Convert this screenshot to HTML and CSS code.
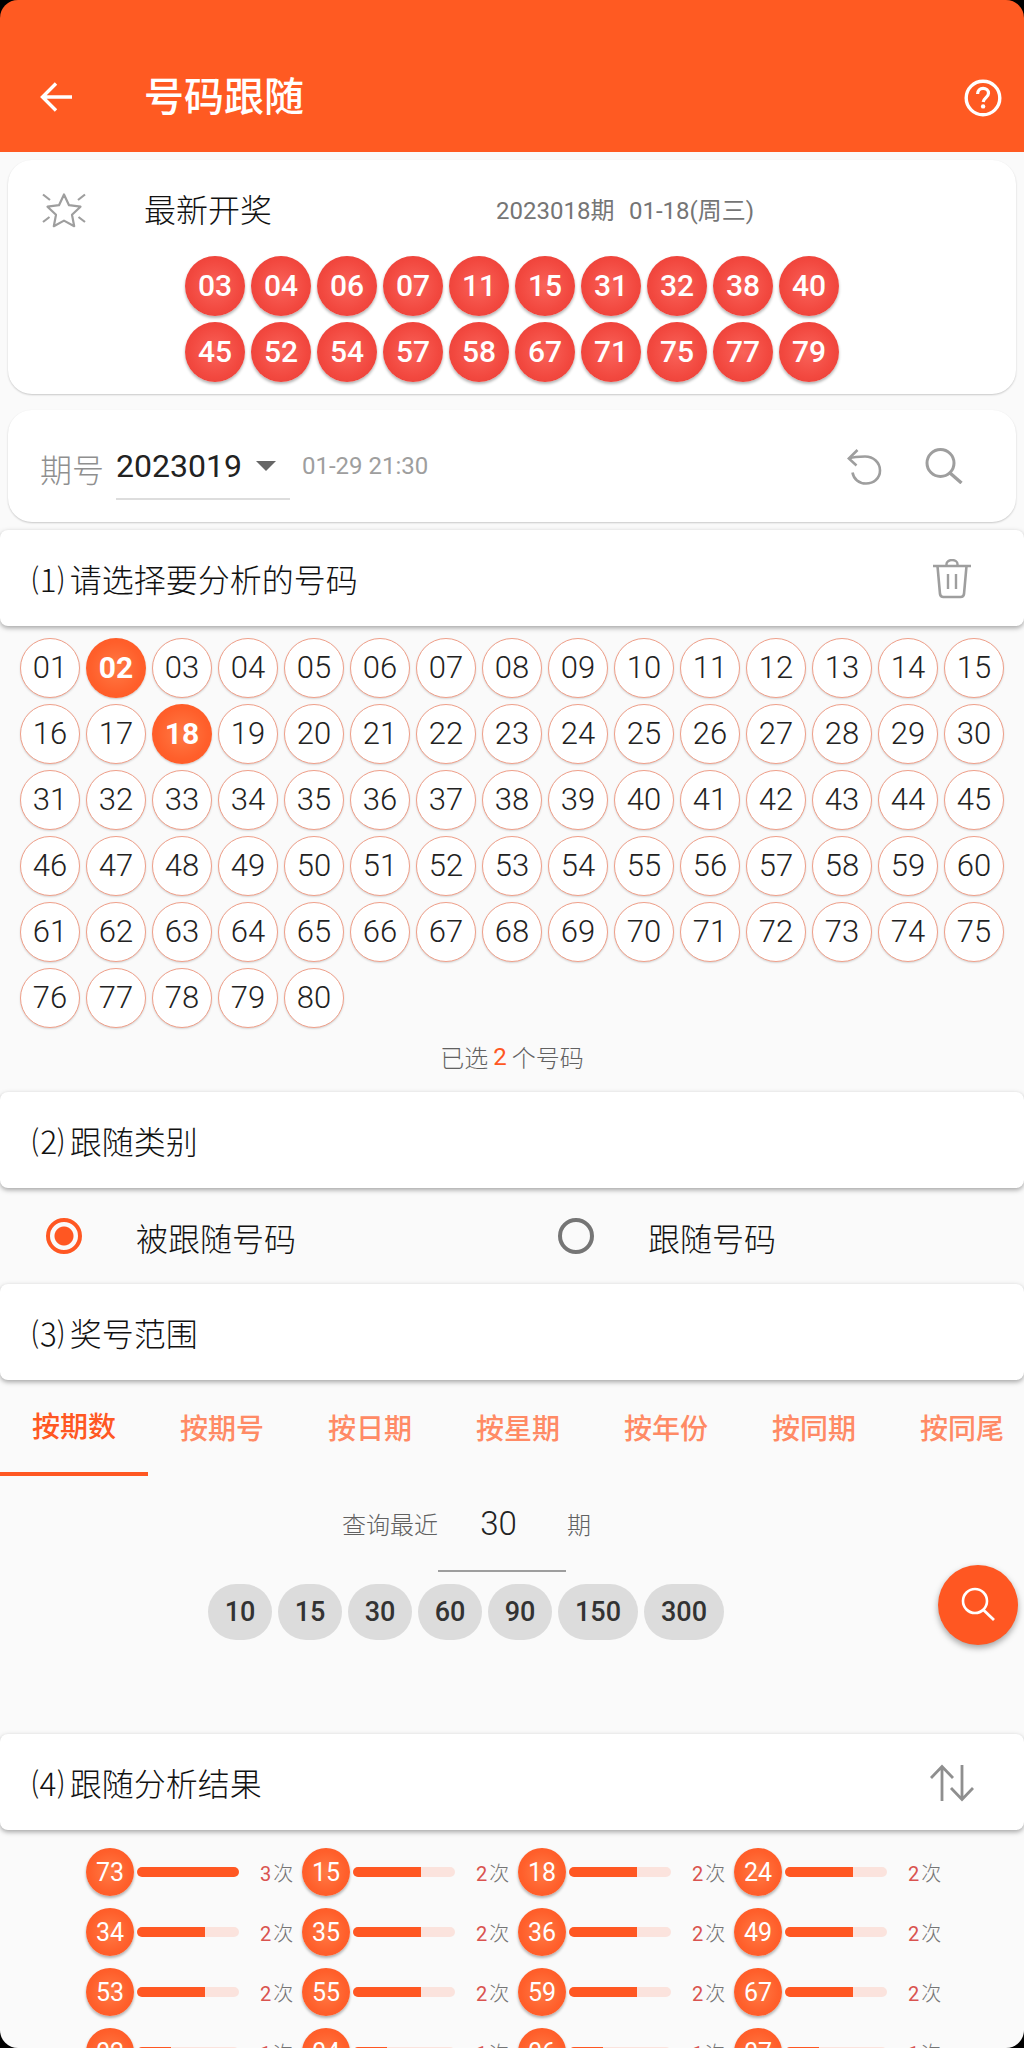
FILE: index.html
```html
<!DOCTYPE html>
<html lang="zh-CN">
<head>
<meta charset="utf-8">
<title>号码跟随</title>
<link rel="stylesheet" href="styles.css">
</head>
<body>
<div class="screen">
  <header class="appbar">
    <svg class="appbar-back" viewBox="0 0 34 34" width="34" height="34"><path d="M32 17H3M16 3.500 2.500 17 16 30.500" fill="none" stroke="#fff" stroke-width="3.400"/></svg>
    <h1 class="appbar-title">号码跟随</h1>
    <svg class="appbar-help" viewBox="0 0 38 38" width="38" height="38"><circle cx="19" cy="19" r="16.800" fill="none" stroke="#fff" stroke-width="3.400"/><path d="M13.600 15c0-3.400 2.400-5.600 5.500-5.600s5.400 2 5.400 4.900c0 4-4.800 4.500-5.300 8.700" fill="none" stroke="#fff" stroke-width="3.200"/><circle cx="19.100" cy="27.400" r="2.200" fill="#fff"/></svg>
  </header>

  <section class="card card-latest">
    <div class="latest-head">
      <svg class="latest-star" viewBox="0 0 44 38" width="44" height="38"><path d="M22 2.500 27 13.200 38.500 14.700 30 22.700 32.200 34.200 22 28.600 11.800 34.200 14 22.700 5.500 14.700 17 13.200Z" fill="none" stroke="#9e9e9e" stroke-width="2.200" stroke-linejoin="round"/><path d="M1 2.500 8 8M43 2.500 36 8M1 30 7.500 25M43 30 36.500 25" stroke="#9e9e9e" stroke-width="2.200" fill="none"/></svg>
      <span class="latest-title">最新开奖</span>
      <span class="latest-info">2023018期&nbsp;&nbsp;01-18(周三)</span>
    </div>
    <div class="latest-balls">
      <span class="ball ball-red">03</span><span class="ball ball-red">04</span><span class="ball ball-red">06</span><span class="ball ball-red">07</span><span class="ball ball-red">11</span><span class="ball ball-red">15</span><span class="ball ball-red">31</span><span class="ball ball-red">32</span><span class="ball ball-red">38</span><span class="ball ball-red">40</span>
      <span class="ball ball-red">45</span><span class="ball ball-red">52</span><span class="ball ball-red">54</span><span class="ball ball-red">57</span><span class="ball ball-red">58</span><span class="ball ball-red">67</span><span class="ball ball-red">71</span><span class="ball ball-red">75</span><span class="ball ball-red">77</span><span class="ball ball-red">79</span>
    </div>
  </section>

  <section class="card card-issue">
    <span class="issue-label">期号</span>
    <div class="issue-select"><span>2023019</span><i class="issue-caret"></i></div>
    <span class="issue-time">01-29 21:30</span>
    <svg class="issue-undo" viewBox="0 0 36 36" width="36" height="36"><path d="M2 9.500C6 8 12 7.500 18 7.500c8.500 0 15 6 15 14s-6.500 13-14 13c-7 0-12.500-4.500-13.500-11" fill="none" stroke="#9e9e9e" stroke-width="2.600"/><path d="M10.500 1 1.800 9.500l7.700 7" fill="none" stroke="#9e9e9e" stroke-width="2.600"/></svg>
    <svg class="issue-search" viewBox="0 0 38 36" width="38" height="36"><circle cx="15.500" cy="15" r="13.500" fill="none" stroke="#9e9e9e" stroke-width="3"/><path d="M25 25 36.500 35" stroke="#9e9e9e" stroke-width="3.400" fill="none"/></svg>
  </section>

  <div class="section-head section-first">
    <span>⑴ 请选择要分析的号码</span>
    <svg class="icon-trash" viewBox="0 0 38 40" width="38" height="40"><path d="M0 7H38" stroke="#9e9e9e" stroke-width="2.400"/><path d="M13.500 7V5a5.500 4 0 0 1 11 0v2" fill="none" stroke="#9e9e9e" stroke-width="2.400"/><path d="M4.500 7 7 35a3.500 3.500 0 0 0 3.500 3h17a3.500 3.500 0 0 0 3.500-3L33.500 7" fill="none" stroke="#9e9e9e" stroke-width="2.600"/><path d="M15 15V30M23 15V30" stroke="#9e9e9e" stroke-width="2.400"/></svg>
  </div>

  <div class="pick-grid">
    <span class="ball ball-line">01</span><span class="ball ball-on">02</span><span class="ball ball-line">03</span><span class="ball ball-line">04</span><span class="ball ball-line">05</span><span class="ball ball-line">06</span><span class="ball ball-line">07</span><span class="ball ball-line">08</span><span class="ball ball-line">09</span><span class="ball ball-line">10</span><span class="ball ball-line">11</span><span class="ball ball-line">12</span><span class="ball ball-line">13</span><span class="ball ball-line">14</span><span class="ball ball-line">15</span>
    <span class="ball ball-line">16</span><span class="ball ball-line">17</span><span class="ball ball-on">18</span><span class="ball ball-line">19</span><span class="ball ball-line">20</span><span class="ball ball-line">21</span><span class="ball ball-line">22</span><span class="ball ball-line">23</span><span class="ball ball-line">24</span><span class="ball ball-line">25</span><span class="ball ball-line">26</span><span class="ball ball-line">27</span><span class="ball ball-line">28</span><span class="ball ball-line">29</span><span class="ball ball-line">30</span>
    <span class="ball ball-line">31</span><span class="ball ball-line">32</span><span class="ball ball-line">33</span><span class="ball ball-line">34</span><span class="ball ball-line">35</span><span class="ball ball-line">36</span><span class="ball ball-line">37</span><span class="ball ball-line">38</span><span class="ball ball-line">39</span><span class="ball ball-line">40</span><span class="ball ball-line">41</span><span class="ball ball-line">42</span><span class="ball ball-line">43</span><span class="ball ball-line">44</span><span class="ball ball-line">45</span>
    <span class="ball ball-line">46</span><span class="ball ball-line">47</span><span class="ball ball-line">48</span><span class="ball ball-line">49</span><span class="ball ball-line">50</span><span class="ball ball-line">51</span><span class="ball ball-line">52</span><span class="ball ball-line">53</span><span class="ball ball-line">54</span><span class="ball ball-line">55</span><span class="ball ball-line">56</span><span class="ball ball-line">57</span><span class="ball ball-line">58</span><span class="ball ball-line">59</span><span class="ball ball-line">60</span>
    <span class="ball ball-line">61</span><span class="ball ball-line">62</span><span class="ball ball-line">63</span><span class="ball ball-line">64</span><span class="ball ball-line">65</span><span class="ball ball-line">66</span><span class="ball ball-line">67</span><span class="ball ball-line">68</span><span class="ball ball-line">69</span><span class="ball ball-line">70</span><span class="ball ball-line">71</span><span class="ball ball-line">72</span><span class="ball ball-line">73</span><span class="ball ball-line">74</span><span class="ball ball-line">75</span>
    <span class="ball ball-line">76</span><span class="ball ball-line">77</span><span class="ball ball-line">78</span><span class="ball ball-line">79</span><span class="ball ball-line">80</span>
  </div>
  <p class="pick-count">已选 <b>2</b> 个号码</p>

  <div class="section-head"><span>⑵ 跟随类别</span></div>
  <div class="radio-row">
    <label class="radio-item"><i class="radio radio-on"></i><span>被跟随号码</span></label>
    <label class="radio-item"><i class="radio"></i><span>跟随号码</span></label>
  </div>

  <div class="section-head"><span>⑶ 奖号范围</span></div>
  <nav class="tabs">
    <span class="tab tab-on">按期数</span><span class="tab">按期号</span><span class="tab">按日期</span><span class="tab">按星期</span><span class="tab">按年份</span><span class="tab">按同期</span><span class="tab">按同尾</span>
  </nav>
  <div class="range">
    <div class="query">
      <span class="query-label">查询最近</span>
      <span class="query-input">30</span>
      <span class="query-label query-unit">期</span>
    </div>
    <div class="chips">
      <span class="chip">10</span><span class="chip">15</span><span class="chip">30</span><span class="chip">60</span><span class="chip">90</span><span class="chip chip-wide">150</span><span class="chip chip-wide">300</span>
    </div>
    <div class="fab"><svg viewBox="0 0 36 36" width="36" height="36"><circle cx="15" cy="14" r="12" fill="none" stroke="#fff" stroke-width="2.600"/><path d="M23.500 23 34 33" stroke="#fff" stroke-width="2.800" fill="none"/></svg></div>
  </div>

  <div class="section-head">
    <span>⑷ 跟随分析结果</span>
    <svg class="icon-sort" viewBox="0 0 44 38" width="44" height="38"><path d="M12 37V3M1 14 12 2.500 23 14" fill="none" stroke="#8f8f8f" stroke-width="2.800"/><path d="M32 1V35M21 24 32 35.500 43 24" fill="none" stroke="#8f8f8f" stroke-width="2.800"/></svg>
  </div>
  <div class="results">
    <div class="res"><span class="ball ball-res">73</span><span class="bar"><i class="bar-fill bar-3"></i></span><span class="res-n"><em>3</em>次</span></div>
    <div class="res"><span class="ball ball-res">15</span><span class="bar"><i class="bar-fill bar-2"></i></span><span class="res-n"><em>2</em>次</span></div>
    <div class="res"><span class="ball ball-res">18</span><span class="bar"><i class="bar-fill bar-2"></i></span><span class="res-n"><em>2</em>次</span></div>
    <div class="res"><span class="ball ball-res">24</span><span class="bar"><i class="bar-fill bar-2"></i></span><span class="res-n"><em>2</em>次</span></div>
    <div class="res"><span class="ball ball-res">34</span><span class="bar"><i class="bar-fill bar-2"></i></span><span class="res-n"><em>2</em>次</span></div>
    <div class="res"><span class="ball ball-res">35</span><span class="bar"><i class="bar-fill bar-2"></i></span><span class="res-n"><em>2</em>次</span></div>
    <div class="res"><span class="ball ball-res">36</span><span class="bar"><i class="bar-fill bar-2"></i></span><span class="res-n"><em>2</em>次</span></div>
    <div class="res"><span class="ball ball-res">49</span><span class="bar"><i class="bar-fill bar-2"></i></span><span class="res-n"><em>2</em>次</span></div>
    <div class="res"><span class="ball ball-res">53</span><span class="bar"><i class="bar-fill bar-2"></i></span><span class="res-n"><em>2</em>次</span></div>
    <div class="res"><span class="ball ball-res">55</span><span class="bar"><i class="bar-fill bar-2"></i></span><span class="res-n"><em>2</em>次</span></div>
    <div class="res"><span class="ball ball-res">59</span><span class="bar"><i class="bar-fill bar-2"></i></span><span class="res-n"><em>2</em>次</span></div>
    <div class="res"><span class="ball ball-res">67</span><span class="bar"><i class="bar-fill bar-2"></i></span><span class="res-n"><em>2</em>次</span></div>
    <div class="res"><span class="ball ball-res">02</span><span class="bar"><i class="bar-fill bar-1"></i></span><span class="res-n"><em>1</em>次</span></div>
    <div class="res"><span class="ball ball-res">04</span><span class="bar"><i class="bar-fill bar-1"></i></span><span class="res-n"><em>1</em>次</span></div>
    <div class="res"><span class="ball ball-res">06</span><span class="bar"><i class="bar-fill bar-1"></i></span><span class="res-n"><em>1</em>次</span></div>
    <div class="res"><span class="ball ball-res">07</span><span class="bar"><i class="bar-fill bar-1"></i></span><span class="res-n"><em>1</em>次</span></div>
  </div>
  <div class="corners"></div>
</div>
</body>
</html>
```
FILE: styles.css
```css
* { box-sizing: border-box; }
html, body { margin: 0; padding: 0; background: #000; }
body { font-family: Roboto, "Noto Sans CJK SC", sans-serif; color: #222; }
.screen { position: relative; width: 1024px; height: 2048px; overflow: hidden; background: #fafafa; }
.corners { position: absolute; inset: 0; border-radius: 18px; box-shadow: 0 0 0 30px #000; pointer-events: none; }

.appbar { height: 152px; background: #ff5a22; display: flex; align-items: center; padding: 44px 22px 0 40px; }
.appbar-back { flex: none; margin-bottom: 2px; }
.appbar-title { margin: 0 0 0 70px; font-size: 40px; font-weight: 500; color: #fff; flex: 1; line-height: 1; }
.appbar-help { flex: none; }

.card { margin: 8px 8px 0; background: #fff; border-radius: 24px; box-shadow: 0 1px 2px rgba(0,0,0,.2); }
.card-latest { height: 234px; padding: 28px 0 0 34px; }
.latest-head { display: flex; align-items: center; height: 48px; }
.latest-star { flex: none; margin-bottom: 3px; }
.latest-title { margin-left: 58px; font-size: 32px; width: 352px; font-weight: 300; color: #111; padding-bottom: 9px; }
.latest-info { font-size: 24px; color: #757575; padding-bottom: 8px; word-spacing: 1.300px; }
.latest-balls { display: grid; grid-template-columns: repeat(10, 60px); gap: 6px; margin: 20px 0 0 143px; }

.ball { display: flex; align-items: center; justify-content: center; border-radius: 50%; width: 60px; height: 60px; padding-bottom: 2px; }
.ball-red { background: radial-gradient(circle, #f9635a 0%, #f2483f 60%, #e53d35 100%); color: #fff; font-size: 30px; font-weight: 500; box-shadow: 0 2px 3px rgba(0,0,0,.3); }
.ball-line { background: #fff; border: 1.5px solid #f0a08a; color: #222; font-size: 31px; font-weight: 300; box-shadow: 0 1px 2px rgba(0,0,0,.15); }
.ball-on { background: radial-gradient(circle, #ff7a45 0%, #ff5f2b 60%, #ff5722 100%); color: #fff; font-size: 30px; font-weight: 700; box-shadow: 0 1px 2px rgba(0,0,0,.2); }
.ball-res { width: 48px; height: 48px; background: radial-gradient(circle, #ff7a45 0%, #ff5f2b 60%, #ff5722 100%); color: #fff; font-size: 25px; font-weight: 400; box-shadow: 0 2px 3px rgba(0,0,0,.3); flex: none; padding-bottom: 0; }

.card-issue { margin-top: 16px; height: 112px; display: flex; align-items: center; padding: 0 40px 0 32px; position: relative; }
.issue-label { font-size: 32px; color: #8f8f8f; font-weight: 300; width: 76px; flex: none; padding-top: 3px; }
.issue-select { width: 174px; height: 66px; margin-top: 2px; border-bottom: 2px solid #ddd; display: flex; align-items: center; font-size: 32px; color: #222; flex: none; }
.issue-caret { width: 0; height: 0; margin-left: 14px; border: 10px solid transparent; border-top-color: #666; border-bottom: 0; }
.issue-time { margin-left: 12px; font-size: 24px; color: #9e9e9e; flex: 1; }
.issue-undo { flex: none; margin-right: 42px; margin-top: 2px; }
.issue-search { flex: none; margin-right: 13px; }

.section-head { height: 96px; background: #fff; border-radius: 8px; box-shadow: 0 2px 5px rgba(0,0,0,.35); display: flex; align-items: center; justify-content: space-between; padding: 0 52px 0 32px; font-size: 32px; font-weight: 300; color: #111; word-spacing: -2px; position: relative; }
.section-first { margin-top: 8px; }
.icon-trash { margin-right: 1px; margin-top: 2px; }
.icon-sort { margin-right: -2px; margin-top: 2px; }

.pick-grid { display: grid; grid-template-columns: repeat(15, 60px); gap: 6px; padding: 12px 0 0 20px; }
.pick-count { margin: 0; height: 64px; display: flex; align-items: center; justify-content: center; gap: 5px; padding-bottom: 7px; font-size: 24px; font-weight: 300; color: #616161; }
.pick-count b { color: #ff5722; font-weight: 400; }

.radio-row { height: 96px; display: grid; grid-template-columns: 1fr 1fr; }
.radio-item { display: flex; align-items: center; padding-left: 46px; font-size: 32px; font-weight: 300; color: #111; }
.radio-item span { margin-left: 54px; margin-top: 2px; }
.radio { width: 36px; height: 36px; border: 4px solid #757575; border-radius: 50%; flex: none; }
.radio-on { border-color: #ff5722; background: radial-gradient(circle, #ff5722 0, #ff5722 9px, transparent 10px); }

.tabs { height: 96px; display: flex; overflow: hidden; }
.tab { flex: none; width: 148px; height: 96px; display: flex; align-items: center; justify-content: center; padding-bottom: 2px; font-size: 28px; font-weight: 500; color: #ff8a65; }
.tab-on { color: #ff5722; border-bottom: 4px solid #ff5722; }

.range { height: 258px; position: relative; }
.query { display: flex; padding-left: 342px; }
.query-label { font-size: 24px; font-weight: 300; color: #616161; width: 96px; padding-top: 30px; }
.query-input { width: 128px; height: 96px; border-bottom: 2px solid #9e9e9e; font-size: 33px; font-weight: 300; color: #222; text-align: center; padding: 28px 7px 0 0; }
.query-unit { margin-left: 1px; }
.chips { display: flex; gap: 6px; margin: 12px 0 0 208px; }
.chip { width: 64px; height: 56px; border-radius: 28px; background: #dcdcdc; display: flex; align-items: center; justify-content: center; font-size: 27px; color: #333; font-weight: 500; }
.chip-wide { width: 80px; }
.fab { position: absolute; left: 938px; top: 89px; width: 80px; height: 80px; border-radius: 50%; background: #ff5722; box-shadow: 0 3px 6px rgba(0,0,0,.35); display: flex; align-items: center; justify-content: center; }

.results { display: grid; grid-template-columns: repeat(4, 216px); row-gap: 12px; padding: 18px 0 0 86px; }
.res { display: flex; align-items: center; height: 48px; }
.bar { width: 102px; height: 10px; margin-left: 3px; border-radius: 5px; background: #fbe3dd; overflow: hidden; flex: none; display: block; }
.bar-fill { display: block; height: 100%; background: #ff5722; }
.bar-3 { width: 100%; }
.bar-2 { width: 66.67%; }
.bar-1 { width: 33.33%; }
.res-n { margin-left: 21px; font-size: 20px; font-weight: 300; color: #757575; white-space: nowrap; }
.res-n em { font-style: normal; color: #d9534f; margin-right: 2px; font-size: 20px; font-weight: 400; }
```
